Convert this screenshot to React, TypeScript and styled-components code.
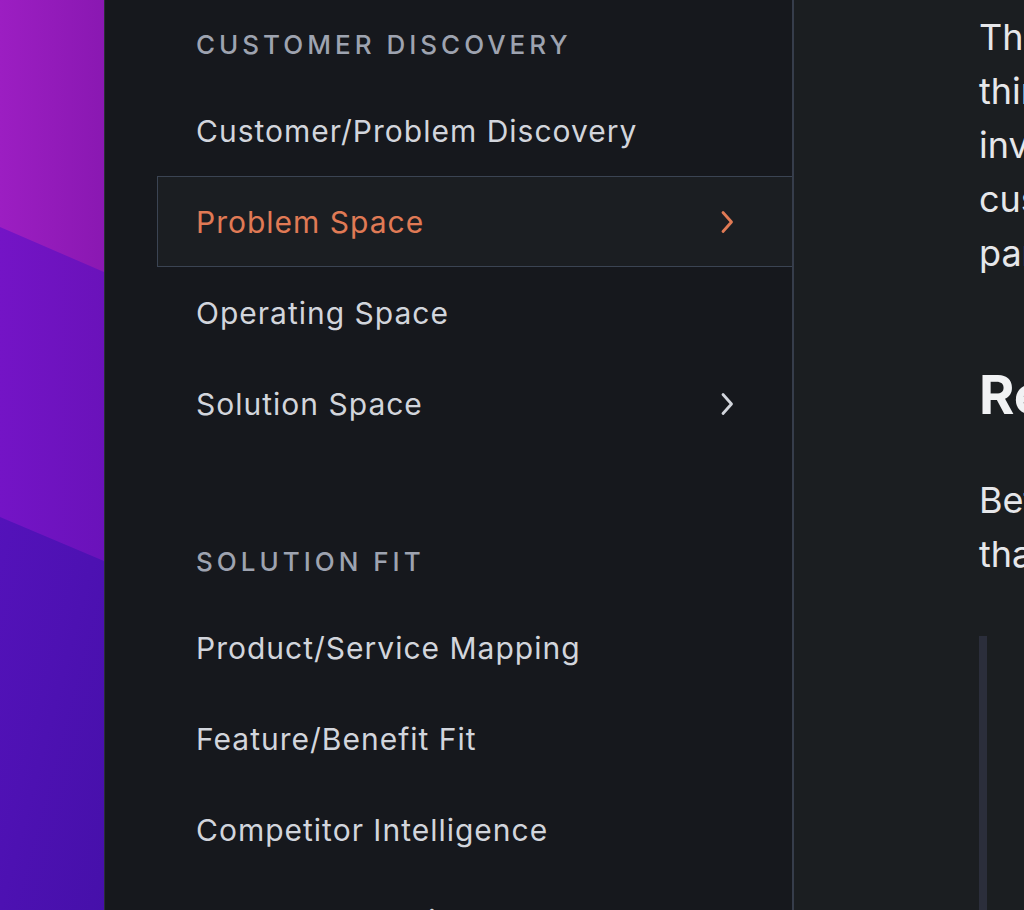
import React from "react";
import styled, { createGlobalStyle } from "styled-components";

const Global = createGlobalStyle`
  html, body { margin: 0; padding: 0; background: #16181d; overflow: hidden; }
  body { font-family: Inter, "Noto Sans", sans-serif; -webkit-font-smoothing: antialiased; }
`;

const Shell = styled.div`
  display: flex;
  width: 1024px;
  height: 910px;
  overflow: hidden;
`;

const Backdrop = styled.div`
  flex: 0 0 104px;
  height: 100%;
  position: relative;
  svg { display: block; width: 100%; height: 100%; }
`;

const Sidebar = styled.nav`
  flex: 0 0 690px;
  background: #16181d;
  border-left: 1px solid #2a2d36;
  border-right: 2px solid #363d4b;
  display: flex;
  flex-direction: column;
  padding: 25px 0 0 52px;
  box-sizing: border-box;
`;

const Section = styled.section<{ $gap?: number }>`
  display: flex;
  flex-direction: column;
  margin-top: ${(p) => p.$gap ?? 0}px;
`;

const SectionTitle = styled.h3`
  margin: 0 0 20px 0;
  padding-left: 39px;
  height: 40px;
  line-height: 40px;
  font-size: 26px;
  font-weight: 500;
  letter-spacing: 4px;
  text-transform: uppercase;
  color: #9ea3b0;
`;

const Item = styled.a<{ $active?: boolean }>`
  display: flex;
  align-items: center;
  justify-content: space-between;
  height: 91px;
  box-sizing: border-box;
  padding: 0 57px 0 38px;
  font-size: 30px;
  letter-spacing: 1px;
  font-weight: 400;
  text-decoration: none;
  color: ${(p) => (p.$active ? "#e07a55" : "#d2d5dc")};
  background: ${(p) => (p.$active ? "#1b1e22" : "transparent")};
  border: 1px solid ${(p) => (p.$active ? "#3b4453" : "transparent")};
  border-right: none;
  svg { flex: 0 0 auto; }
`;

const Main = styled.main`
  flex: 1 1 auto;
  background: #1b1e21;
  padding: 10px 0 0 185px;
  overflow: hidden;
  color: #e6e7ea;
`;

const Para = styled.p<{ $top?: number }>`
  margin: ${(p) => p.$top ?? 0}px 0 0 0;
  font-size: 36px;
  letter-spacing: 0;
  line-height: 54px;
  white-space: nowrap;
`;

const Heading = styled.h2`
  margin: 85px 0 0 0;
  font-size: 54px;
  line-height: 60px;
  font-weight: 700;
  white-space: nowrap;
  color: #f1f2f4;
`;

const Quote = styled.blockquote`
  margin: 55px 0 0 0;
  border-left: 8px solid #2b2e3b;
  height: 400px;
  padding-left: 40px;
`;

const Chevron = ({ color }: { color: string }) => (
  <svg width="16" height="24" viewBox="0 0 16 24" fill="none">
    <path d="M4 2.5 L12.5 12 L4 21.5" stroke={color} strokeWidth="2.8" strokeLinecap="round" strokeLinejoin="round" />
  </svg>
);

export default function App() {
  return (
    <>
      <Global />
      <Shell>
        <Backdrop>
          <svg viewBox="0 0 104 910" preserveAspectRatio="none">
            <defs>
              <linearGradient id="g1" x1="0" y1="0" x2="1" y2="0">
                <stop offset="0" stopColor="#9c1ec2" />
                <stop offset="1" stopColor="#8a18b2" />
              </linearGradient>
              <linearGradient id="g2" x1="0" y1="0" x2="1" y2="0">
                <stop offset="0" stopColor="#7414c6" />
                <stop offset="1" stopColor="#6a12ba" />
              </linearGradient>
              <linearGradient id="g3" x1="0" y1="0" x2="1" y2="1">
                <stop offset="0" stopColor="#5412ba" />
                <stop offset="1" stopColor="#4610aa" />
              </linearGradient>
            </defs>
            <rect x="0" y="0" width="104" height="910" fill="url(#g1)" />
            <polygon points="0,227 104,272 104,910 0,910" fill="url(#g2)" />
            <polygon points="0,517 104,561 104,910 0,910" fill="url(#g3)" />
          </svg>
        </Backdrop>
        <Sidebar>
          <Section>
            <SectionTitle>Customer Discovery</SectionTitle>
            <Item>Customer/Problem Discovery</Item>
            <Item $active>
              Problem Space
              <Chevron color="#e07a55" />
            </Item>
            <Item>Operating Space</Item>
            <Item>
              Solution Space
              <Chevron color="#d2d5dc" />
            </Item>
          </Section>
          <Section $gap={93}>
            <SectionTitle>Solution Fit</SectionTitle>
            <Item>Product/Service Mapping</Item>
            <Item>Feature/Benefit Fit</Item>
            <Item>Competitor Intelligence</Item>
            <Item>Product Marketing Content</Item>
          </Section>
        </Sidebar>
        <Main>
          <Para>
            The problem space is where you start
            <br />
            thinking about your customer and
            <br />
            investigating the challenges your
            <br />
            customers face. It is the most important
            <br />
            part of discovery.
          </Para>
          <Heading>Research</Heading>
          <Para $top={48}>
            Before you dive into solutions, make sure
            <br />
            that you understand the problem deeply.
          </Para>
          <Quote />
        </Main>
      </Shell>
    </>
  );
}
